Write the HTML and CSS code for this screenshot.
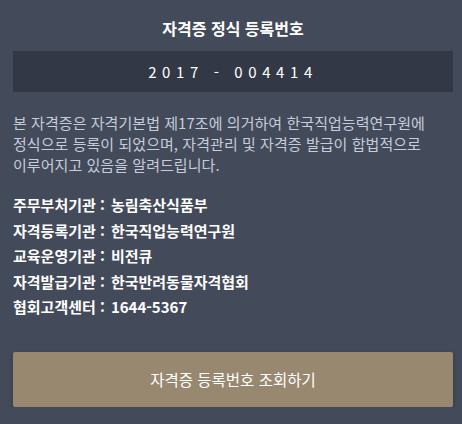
FILE: index.html
```html
<!DOCTYPE html>
<html lang="ko">
<head>
<meta charset="utf-8">
<link rel="stylesheet" href="styles.css">
</head>
<body>
<div class="page">
  <h1 class="title">자격증 정식 등록번호</h1>
  <div class="number">2017 - 004414</div>
  <p class="desc">본 자격증은 자격기본법 제17조에 의거하여 한국직업능력연구원에 정식으로 등록이 되었으며, 자격관리 및 자격증 발급이 합법적으로 이루어지고 있음을 알려드립니다.</p>
  <ul class="info">
    <li><span class="label">주무부처기관 :</span>농림축산식품부</li>
    <li><span class="label">자격등록기관 :</span>한국직업능력연구원</li>
    <li><span class="label">교육운영기관 :</span>비전큐</li>
    <li><span class="label">자격발급기관 :</span>한국반려동물자격협회</li>
    <li><span class="label">협회고객센터 :</span>1644-5367</li>
  </ul>
  <button class="btn">자격증 등록번호 조회하기</button>
</div>
</body>
</html>
```
FILE: styles.css
```css
html, body {
  margin: 0;
  padding: 0;
  background: #434a5a;
}
body {
  font-family: "Noto Sans CJK KR", "Noto Sans", sans-serif;
  color: #fff;
}
.page {
  padding: 15px 9px 0 13px;
  display: flex;
  flex-direction: column;
}
.title {
  margin: 0;
  font-size: 16px;
  font-weight: 700;
  text-align: center;
  line-height: 26px;
  height: 36px;
}
.number {
  background: #323845;
  height: 41px;
  display: flex;
  align-items: center;
  justify-content: center;
  font-size: 15px;
  letter-spacing: 5.6px;
  color: #fff;
}
.desc {
  margin: 20px 0 0 0;
  font-size: 15px;
  line-height: 21px;
  color: #c5cddb;
  letter-spacing: 0.05px;
  word-break: keep-all;
}
.info {
  list-style: none;
  margin: 17px 0 0 0;
  padding: 0;
  font-size: 15px;
  font-weight: 700;
  letter-spacing: 0;
}
.info li {
  line-height: 25.6px;
}
.label {
  margin-right: 6px;
}
.btn {
  margin-top: 32px;
  height: 55px;
  background: #998870;
  border: none;
  border-radius: 2px;
  box-shadow: 0 2px 4px rgba(0,0,0,0.25);
  color: #fff;
  font-family: inherit;
  font-size: 15.5px;
  font-weight: 400;
}
```
